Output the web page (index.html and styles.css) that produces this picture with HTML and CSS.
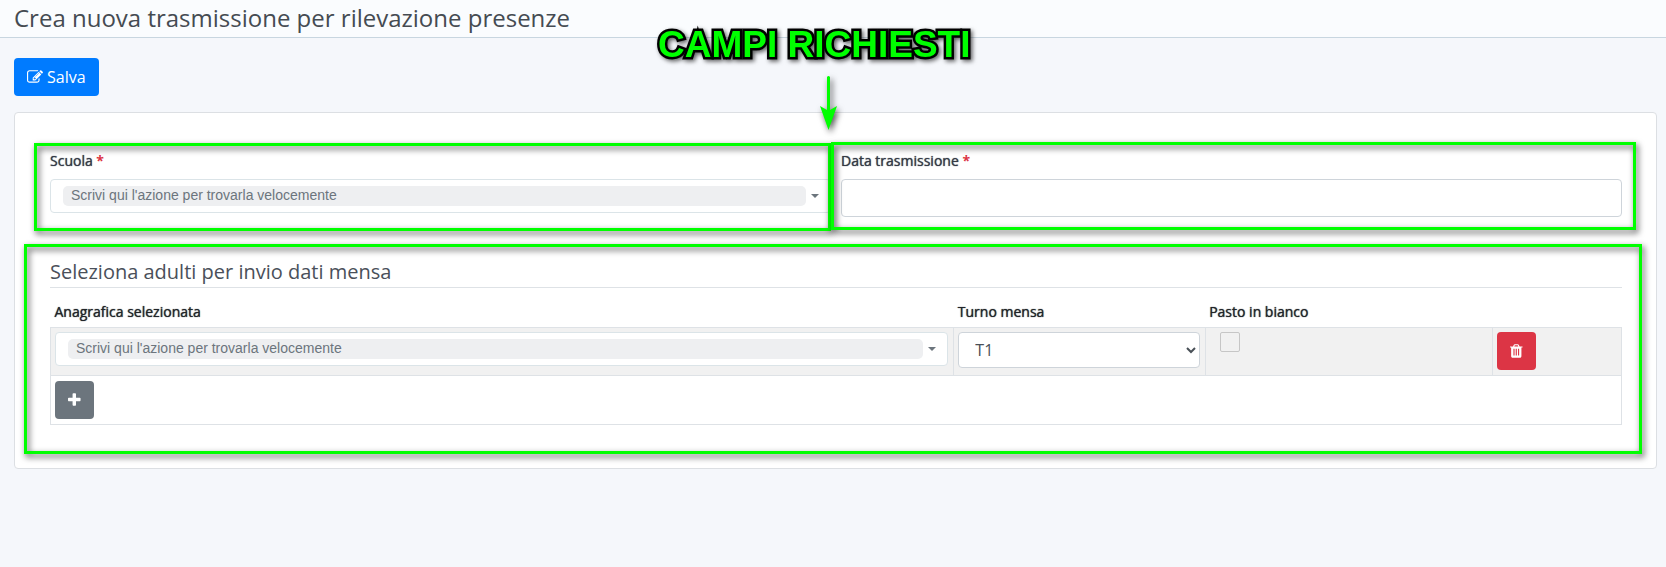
FILE: index.html
```html
<!DOCTYPE html>
<html lang="it">

<head>
  <meta charset="UTF-8">
  <meta name="viewport" content="width=device-width, initial-scale=1.0">
  <title>Crea nuova trasmissione per rilevazione presenze</title>
  <link rel="stylesheet" href="styles.css">
</head>

<body>

  <header class="page-header">
    <h1>Crea nuova trasmissione per rilevazione presenze</h1>
  </header>

  <form class="content">
    <button type="button" class="btn btn-primary">
      <svg class="icon" viewBox="0 0 1792 1792"><path d="M888 1184l116-116-152-152-116 116v56h96v96h56zm440-720q-16-16-33 1l-350 350q-17 17-1 33t33-1l350-350q17-17 1-33zm80 594v190q0 119-84.500 203.500t-203.500 84.500h-832q-119 0-203.500-84.500t-84.500-203.500v-832q0-119 84.500-203.500t203.500-84.500h832q63 0 117 25 15 7 18 23 3 17-9 29l-49 49q-14 14-32 8-23-6-45-6h-832q-66 0-113 47t-47 113v832q0 66 47 113t113 47h832q66 0 113-47t47-113v-126q0-13 9-22l64-64q15-15 35-7t20 29zm-96-738l288 288-672 672h-288v-288zm444 132l-92 92-288-288 92-92q28-28 68-28t68 28l152 152q28 28 28 68t-28 68z"/></svg>
      Salva
    </button>

    <div class="card">
      <div class="form-row">
        <div class="field mark mark-school">
          <label for="school">Scuola <span class="required">*</span></label>
          <div class="picker">
            <select id="school">
              <option>Scrivi qui l'azione per trovarla velocemente</option>
            </select>
            <span class="caret"></span>
          </div>
        </div>
        <div class="field mark mark-date">
          <label for="date">Data trasmissione <span class="required">*</span></label>
          <input type="text" id="date" class="form-control">
        </div>
      </div>

      <section class="adults mark mark-adults">
        <h2>Seleziona adulti per invio dati mensa</h2>
        <table>
          <colgroup>
            <col class="col-person">
            <col class="col-shift">
            <col class="col-meal">
            <col class="col-action">
          </colgroup>
          <thead>
            <tr>
              <th><label for="person">Anagrafica selezionata</label></th>
              <th><label for="shift">Turno mensa</label></th>
              <th><label for="meal">Pasto in bianco</label></th>
              <th></th>
            </tr>
          </thead>
          <tbody>
            <tr class="odd">
              <td>
                <div class="picker">
                  <select id="person">
                    <option>Scrivi qui l'azione per trovarla velocemente</option>
                  </select>
                  <span class="caret"></span>
                </div>
              </td>
              <td>
                <select id="shift" class="form-control">
                  <option>T1</option>
                </select>
              </td>
              <td><input type="checkbox" id="meal" class="check"></td>
              <td>
                <button type="button" class="btn btn-danger" aria-label="Elimina">
                  <svg class="icon" viewBox="192 0 1408 1792"><path d="M704 1376v-704q0-14-9-23t-23-9h-64q-14 0-23 9t-9 23v704q0 14 9 23t23 9h64q14 0 23-9t9-23zm256 0v-704q0-14-9-23t-23-9h-64q-14 0-23 9t-9 23v704q0 14 9 23t23 9h64q14 0 23-9t9-23zm256 0v-704q0-14-9-23t-23-9h-64q-14 0-23 9t-9 23v704q0 14 9 23t23 9h64q14 0 23-9t9-23zm-544-992h448l-48-117q-7-9-17-11h-317q-10 2-17 11zm928 32v64q0 14-9 23t-23 9h-96v948q0 83-47 143.500t-113 60.500h-832q-66 0-113-58.500t-47-141.500v-952h-96q-14 0-23-9t-9-23v-64q0-14 9-23t23-9h309l70-167q15-37 54-63t79-26h320q40 0 79 26t54 63l70 167h309q14 0 23 9t9 23z"/></svg>
                </button>
              </td>
            </tr>
            <tr>
              <td colspan="4">
                <button type="button" class="btn btn-secondary" aria-label="Aggiungi">
                  <svg class="icon" viewBox="192 0 1408 1792"><path d="M1600 736v192q0 40-28 68t-68 28h-416v416q0 40-28 68t-68 28h-192q-40 0-68-28t-28-68v-416h-416q-40 0-68-28t-28-68v-192q0-40 28-68t68-28h416v-416q0-40 28-68t68-28h192q40 0 68 28t28 68v416h416q40 0 68 28t28 68z"/></svg>
                </button>
              </td>
            </tr>
          </tbody>
        </table>
      </section>
    </div>
  </form>

  <!-- callout over the form -->
  <div class="callout">CAMPI RICHIESTI</div>
  <svg class="arrow" width="17" height="54" viewBox="0 0 17 54">
    <path d="M7 1q1.500-2 3 0v33l7-4-8.500 24L0 30l7 4z" fill="#0f0"/>
  </svg>

</body>

</html>
```

FILE: styles.css
```css
* {
  box-sizing: border-box;
}

body {
  margin: 0;
  background-color: #f5f7fb;
  color: #212529;
  font-family: "Open Sans", "Liberation Sans", sans-serif;
  font-size: 14px;
  line-height: 20px;
}

.page-header {
  height: 38px;
  padding: 0 14px;
  background-color: #fafcfe;
  border-bottom: 1px solid #c8d6e0;
}

.page-header h1 {
  margin: 0;
  color: #454b52;
  font-size: 24px;
  font-weight: 400;
  line-height: 36px;
}

.content {
  padding: 20px 9px 20px 14px;
}

.btn {
  display: flex;
  align-items: center;
  gap: 4px;
  height: 38px;
  padding: 0 13px;
  border: 0;
  border-radius: 4px;
  color: #fff;
  font-family: inherit;
  font-size: 16px;
}

.btn-primary {
  background-color: #007bff;
}

.btn-secondary {
  background-color: #6c757d;
}

.btn-danger {
  background-color: #dc3545;
}

.icon {
  height: 16px;
  fill: currentColor;
}

.card {
  margin-top: 16px;
  padding: 38px 34px 43px 35px;
  background-color: #fff;
  border: 1px solid #dcdfe3;
  border-radius: 4px;
}

.form-row {
  display: grid;
  grid-template-columns: 1fr 1fr;
  gap: 10px;
}

.field label {
  display: block;
  margin-bottom: 8px;
  color: #343a46;
}

label {
  font-weight: 500;
  text-shadow: 0 0 1px currentColor;
}

.required {
  color: #dc3545;
  font-weight: 700;
  text-shadow: none;
}

.picker {
  display: flex;
  align-items: center;
  height: 34px;
  padding: 0 11px 0 12px;
  background-color: #fff;
  border: 1px solid #dbe4e8;
  border-radius: 4px;
}

.picker select {
  appearance: none;
  flex: 1;
  height: 20px;
  padding: 0 8px 2px;
  border: 0;
  border-radius: 5px;
  background-color: #eeeff1;
  color: #6c757d;
  font-family: "Liberation Sans", sans-serif;
  font-size: 14px;
}

.caret {
  margin-left: 5px;
  border: 4px solid transparent;
  border-top-color: #6c757d;
  border-bottom: 0;
}

.form-control {
  display: block;
  width: 100%;
  height: 38px;
  padding: 0 12px;
  background-color: #fff;
  border: 1px solid #ced4da;
  border-radius: 4px;
  color: #495057;
  font-family: inherit;
  font-size: 16px;
}

select.form-control {
  height: 36px;
}

.adults {
  margin-top: 40px;
}

.adults h2 {
  margin: 0 0 12px;
  padding-bottom: 1px;
  border-bottom: 1px solid #dee2e6;
  color: #4a505a;
  font-size: 20px;
  font-weight: 400;
  line-height: 29px;
}

table {
  width: 100%;
  border-collapse: collapse;
  table-layout: fixed;
}

.col-person {
  width: 57.5%;
}

.col-shift {
  width: 16%;
}

.col-meal {
  width: 18.3%;
}

th {
  height: 27px;
  padding: 0 4px;
  text-align: left;
  vertical-align: top;
}

th label {
  display: block;
  line-height: 24px;
}

td {
  padding: 4px 5px 5px 4px;
  border: 1px solid #dee2e6;
  vertical-align: top;
}

td[colspan] {
  padding-top: 5px;
}

tbody .odd {
  background-color: #f1f1f1;
}

.check {
  appearance: none;
  display: block;
  width: 20px;
  height: 20px;
  margin: 0 0 0 10px;
  border: 1px solid #c6c6c6;
  border-radius: 2px;
}

/* green frames around the required fields */
.mark {
  position: relative;
}

.mark::after {
  content: "";
  position: absolute;
  border: 3px solid #0f0;
  filter: drop-shadow(2px 3px 3px rgba(0, 0, 0, 0.7));
  pointer-events: none;
}

.mark-school::after {
  inset: -8px 0 -14px -16px;
}

.mark-date::after {
  inset: -9px -14px -13px -10px;
}

.mark-adults::after {
  inset: -13px -20px -29px -26px;
}

.callout {
  position: absolute;
  top: 24px;
  left: 658px;
  color: #0f0;
  font-family: "Liberation Sans", sans-serif;
  font-size: 37px;
  font-weight: 700;
  line-height: 42px;
  -webkit-text-stroke: 5px #000;
  paint-order: stroke fill;
  filter: drop-shadow(2px 2px 2px rgba(0, 0, 0, 0.6));
}

.arrow {
  position: absolute;
  top: 76px;
  left: 820px;
  overflow: visible;
  filter: drop-shadow(2px 3px 3px rgba(0, 0, 0, 0.7));
}
```
